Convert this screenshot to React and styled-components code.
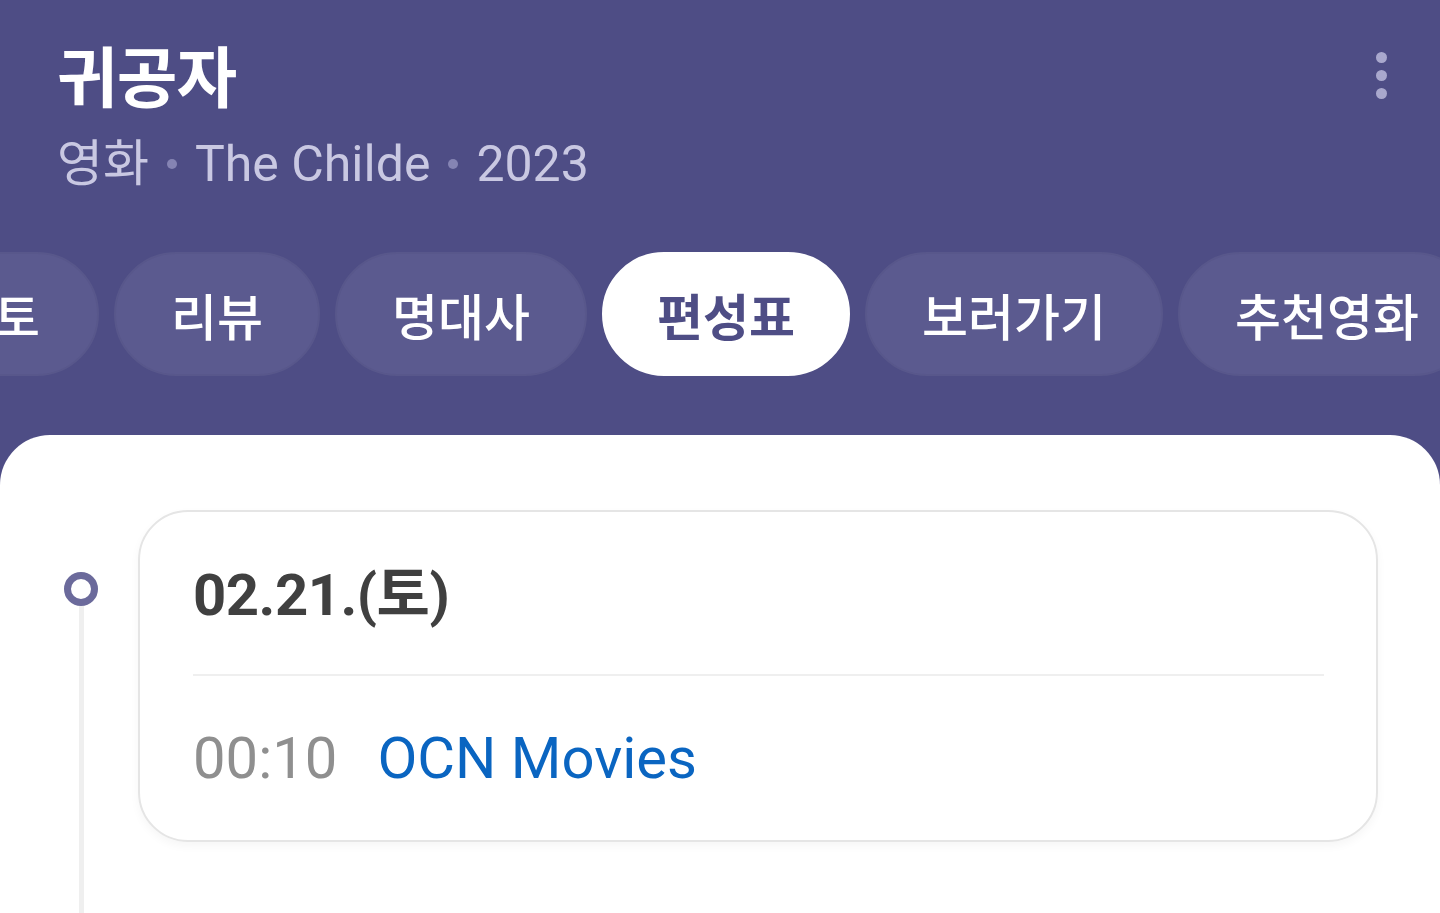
import React from "react";
import styled, { createGlobalStyle } from "styled-components";

const GlobalStyle = createGlobalStyle`
  html, body {
    margin: 0;
    padding: 0;
    background: #4e4d85;
  }
  body {
    font-family: Roboto, "Noto Sans CJK KR", sans-serif;
    overflow: hidden;
  }
`;

const Screen = styled.div`
  width: 1440px;
  height: 913px;
  display: flex;
  flex-direction: column;
  background: #4e4d85;
  overflow: hidden;
`;

const Header = styled.header`
  display: flex;
  justify-content: space-between;
  align-items: flex-start;
  padding: 36px 41px 0 57px;
`;

const TitleBlock = styled.div`
  display: flex;
  flex-direction: column;
`;

const Title = styled.h1`
  margin: 0;
  font-size: 66px;
  line-height: 88px;
  font-weight: 700;
  color: #ffffff;
  letter-spacing: -1px;
`;

const Meta = styled.div`
  display: flex;
  align-items: center;
  gap: 18px;
  margin-top: 8px;
  font-size: 50px;
  line-height: 64px;
  color: #c9c8e2;
`;

const MetaDot = styled.span`
  width: 10px;
  height: 10px;
  border-radius: 50%;
  background: #8584b3;
`;

const MoreButton = styled.button`
  display: flex;
  flex-direction: column;
  gap: 7px;
  padding: 16px 12px;
  background: none;
  border: 0;
`;

const MoreDot = styled.span`
  width: 11px;
  height: 11px;
  border-radius: 50%;
  background: #a9a8cd;
`;

const TabStrip = styled.nav`
  margin-top: 56px;
  overflow: hidden;
`;

const TabRow = styled.div`
  display: flex;
  gap: 15px;
  margin-left: -61px;
`;

const Tab = styled.div`
  flex: none;
  display: flex;
  align-items: center;
  justify-content: ${(p) => (p.$cut ? "flex-end" : "center")};
  width: ${(p) => (p.$cut ? "160px" : "auto")};
  height: 124px;
  padding: ${(p) => (p.$cut ? "0 57px 0 0" : p.$active ? "0 53px" : "0 55px")};
  box-sizing: border-box;
  border-radius: 62px;
  font-family: "Noto Sans CJK KR", sans-serif;
  font-size: 50px;
  font-weight: ${(p) => (p.$active ? 700 : 500)};
  color: ${(p) => (p.$active ? "#4e4d85" : "#ffffff")};
  background: ${(p) => (p.$active ? "#ffffff" : "#5b5a8f")};
  border: 2px solid ${(p) => (p.$active ? "#ffffff" : "#58578b")};
  white-space: nowrap;
`;

const Sheet = styled.main`
  flex: 1;
  margin-top: 59px;
  background: #ffffff;
  border-radius: 50px 50px 0 0;
  padding: 75px 62px 0;
  display: grid;
  grid-template-columns: 38px 1fr;
  column-gap: 38px;
`;

const Timeline = styled.div`
  display: flex;
  flex-direction: column;
  align-items: center;
  padding-top: 62px;
`;

const Node = styled.span`
  width: 34px;
  height: 34px;
  box-sizing: border-box;
  border: 7px solid #6b6a9b;
  border-radius: 50%;
`;

const Rail = styled.span`
  flex: 1;
  width: 5px;
  background: #efefef;
`;

const Card = styled.section`
  align-self: start;
  border: 2px solid #e5e5e5;
  border-radius: 50px;
  padding: 0 52px 0 53px;
  box-shadow: 0 4px 10px rgba(0, 0, 0, 0.04);
`;

const DateRow = styled.div`
  height: 164px;
  display: flex;
  align-items: center;
  padding-bottom: 6px;
  box-sizing: border-box;
  border-bottom: 2px solid #efefef;
  font-size: 58px;
  font-weight: 700;
  color: #404040;
  letter-spacing: -0.5px;
`;

const SlotRow = styled.div`
  height: 164px;
  display: flex;
  align-items: center;
  gap: 40px;
  font-size: 58px;
`;

const Time = styled.span`
  color: #8f8f8f;
`;

const Channel = styled.span`
  color: #0a65c1;
`;

const tabs = ["포토", "리뷰", "명대사", "편성표", "보러가기", "추천영화"];

export default function App() {
  return (
    <>
      <GlobalStyle />
      <Screen>
        <Header>
          <TitleBlock>
            <Title>귀공자</Title>
            <Meta>
              <span>영화</span>
              <MetaDot />
              <span>The Childe</span>
              <MetaDot />
              <span>2023</span>
            </Meta>
          </TitleBlock>
          <MoreButton aria-label="more">
            <MoreDot />
            <MoreDot />
            <MoreDot />
          </MoreButton>
        </Header>
        <TabStrip>
          <TabRow>
            {tabs.map((t, i) => (
              <Tab key={t} $cut={i === 0} $active={t === "편성표"}>
                {i === 0 ? "토" : t}
              </Tab>
            ))}
          </TabRow>
        </TabStrip>
        <Sheet>
          <Timeline>
            <Node />
            <Rail />
          </Timeline>
          <Card>
            <DateRow>02.21.(토)</DateRow>
            <SlotRow>
              <Time>00:10</Time>
              <Channel>OCN Movies</Channel>
            </SlotRow>
          </Card>
        </Sheet>
      </Screen>
    </>
  );
}
